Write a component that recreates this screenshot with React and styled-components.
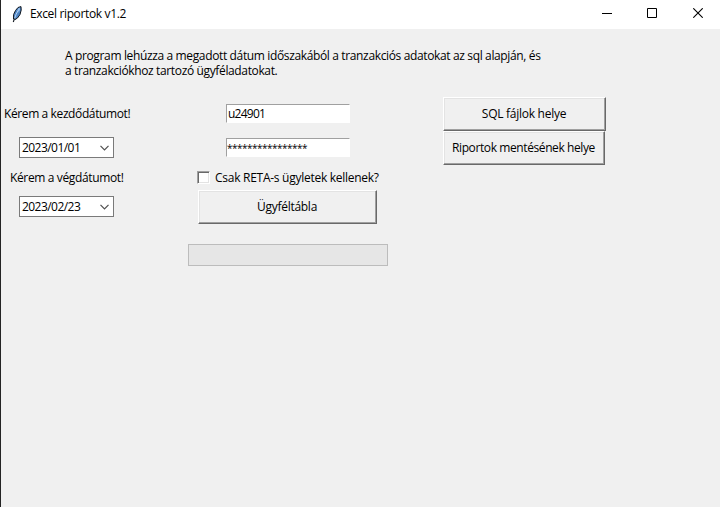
import React from "react";
import styled, { createGlobalStyle } from "styled-components";

const GlobalStyle = createGlobalStyle`
  * { box-sizing: border-box; }
  body { margin: 0; background: #f0f0f0; overflow: hidden; }
`;

const Window = styled.div`
  width: 720px;
  height: 507px;
  border-left: 1px solid #242424;
  background: #f0f0f0;
  color: #000;
  font: 12px/15px "Open Sans", "Noto Sans", sans-serif;
  display: flex;
  flex-direction: column;
`;

const TitleBar = styled.header`
  height: 29px;
  flex: none;
  background: #fff;
  display: flex;
  align-items: center;
  padding-left: 8px;
`;

const Title = styled.h1`
  margin: 0 auto 0 5px;
  padding-bottom: 2px;
  font: inherit;
`;

const WindowButton = styled.button`
  width: ${(p) => p.$width}px;
  height: 29px;
  padding: 0 0 3px;
  border: 0;
  background: none;
  display: flex;
  align-items: center;
  justify-content: center;
`;

const Text = styled.span`
  display: inline-block;
  white-space: nowrap;
  letter-spacing: ${(p) => p.$track ?? -0.36}px;
`;

const MaskedText = styled(Text)`
  font-size: 10px;
  letter-spacing: -0.51px;
  margin-left: -1px;
`;

const Intro = styled.p`
  margin: 19px 0 0 64px;
  height: 48px;
`;

const Form = styled.main`
  display: grid;
  grid-template-columns: 187px 200px 55px 163px;
  align-items: start;
  margin-top: 1px;
`;

const DateColumn = styled.section`
  padding-top: 9px;
  display: flex;
  flex-direction: column;
`;

const DateLabel = styled.label`
  height: 15px;
  padding-left: ${(p) => p.$indent}px;
  margin-bottom: ${(p) => p.$gap}px;
`;

const DateBox = styled.div`
  width: 95px;
  height: 21px;
  margin: 0 0 ${(p) => p.$gap || 0}px 18px;
  padding: 0 4px 0 2px;
  border: 1px solid #7a7a7a;
  background: #fff;
  display: flex;
  align-items: center;
  justify-content: space-between;
`;

const LoginColumn = styled.section`
  padding-top: 7px;
  display: flex;
  flex-direction: column;
`;

const Entry = styled.div`
  width: 124px;
  height: 19px;
  margin: 0 0 ${(p) => p.$gap}px 38px;
  padding: 1px 0 0 1px;
  border: 1px solid;
  border-color: #a0a0a0 #fff #fff #a0a0a0;
  background: #fff;
`;

const CheckRow = styled.label`
  height: 15px;
  margin: 0 0 5px 9px;
  display: flex;
  align-items: flex-start;
  gap: 5px;
`;

const CheckBox = styled.span`
  flex: none;
  width: 13px;
  height: 13px;
  margin-top: 1px;
  border: 1px solid;
  border-color: #a0a0a0 #fff #fff #a0a0a0;
  background: #fff;
  box-shadow: inset 1px 1px #696969, inset -1px -1px #e3e3e3;
`;

const PushButton = styled.button`
  width: ${(p) => p.$width}px;
  height: 34px;
  margin: ${(p) => p.$margin || "0"};
  padding: 0 1px 2px 0;
  border: 1px solid;
  border-color: #fff #696969 #696969 #fff;
  background: #f0f0f0;
  box-shadow: inset -1px -1px #a0a0a0, inset 1px 1px #e3e3e3;
  color: inherit;
  font: inherit;
  display: flex;
  align-items: center;
  justify-content: center;
`;

const ProgressTrack = styled.div`
  width: 200px;
  height: 22px;
  border: 1px solid #bcbcbc;
  background: #e6e6e6;
`;

const FileColumn = styled.section`
  grid-column: 4;
  display: flex;
  flex-direction: column;
`;

const Feather = () => (
  <svg width="16" height="18" viewBox="0 0 16 18">
    <path d="M4.5 13 4.6 8.5 6.5 4.5 9 1.5 12 .6 12.2 4 11 8.5 8.5 12 6 13.6Z" fill="#4d84c4" stroke="#10161e" />
    <path d="M9 2.6 11 1.6 11 4 9.6 6.5Z" fill="#8db8e8" />
    <path d="M5 14 7 8.6 9.6 3.5" fill="none" stroke="#c4dcf5" strokeWidth=".9" />
    <path d="M4.3 16 5.5 12.5" stroke="#10161e" strokeWidth="1.1" />
  </svg>
);

const Chevron = () => (
  <svg width="9" height="6" viewBox="0 0 9 6">
    <path d="M.5 .8 4.5 4.8 8.5 .8" fill="none" stroke="#505050" strokeWidth="1.2" />
  </svg>
);

const MinimizeIcon = styled.svg`
  margin-left: 2px;
`;

export default function App() {
  return (
    <Window>
      <GlobalStyle />
      <TitleBar>
        <Feather />
        <Title><Text>Excel riportok v1.2</Text></Title>
        <WindowButton aria-label="Minimize" $width={44}>
          <MinimizeIcon width="10" height="10"><path d="M0 5.5H10" stroke="#000" /></MinimizeIcon>
        </WindowButton>
        <WindowButton aria-label="Maximize" $width={48}>
          <svg width="10" height="10"><path d="M.5 .5H9.5V9.5H.5Z" fill="none" stroke="#000" /></svg>
        </WindowButton>
        <WindowButton aria-label="Close" $width={44}>
          <svg width="10" height="10"><path d="M.3 .3 9.7 9.7M9.7 .3 .3 9.7" stroke="#000" strokeWidth="1.1" /></svg>
        </WindowButton>
      </TitleBar>
      <Intro>
        <Text>
          A program lehúzza a megadott dátum időszakából a tranzakciós adatokat az sql alapján, és<br />
          a tranzakciókhoz tartozó ügyféladatokat.
        </Text>
      </Intro>
      <Form>
        <DateColumn>
          <DateLabel $indent={3} $gap={16}><Text $track={-0.39}>Kérem a kezdődátumot!</Text></DateLabel>
          <DateBox $gap={12}><Text $track={-0.55}>2023/01/01</Text><Chevron /></DateBox>
          <DateLabel $indent={9} $gap={11}><Text>Kérem a végdátumot!</Text></DateLabel>
          <DateBox><Text $track={-0.55}>2023/02/23</Text><Chevron /></DateBox>
        </DateColumn>
        <LoginColumn>
          <Entry $gap={15}><Text $track={-0.75}>u24901</Text></Entry>
          <Entry $gap={13}><MaskedText>****************</MaskedText></Entry>
          <CheckRow><CheckBox /><Text $track={-0.27}>Csak RETA-s ügyletek kellenek?</Text></CheckRow>
          <PushButton $width={179} $margin="0 0 20px 10px"><Text $track={-0.27}>Ügyféltábla</Text></PushButton>
          <ProgressTrack />
        </LoginColumn>
        <FileColumn>
          <PushButton $width={163}><Text $track={-0.27}>SQL fájlok helye</Text></PushButton>
          <PushButton $width={162}><Text $track={-0.4}>Riportok mentésének helye</Text></PushButton>
        </FileColumn>
      </Form>
    </Window>
  );
}
